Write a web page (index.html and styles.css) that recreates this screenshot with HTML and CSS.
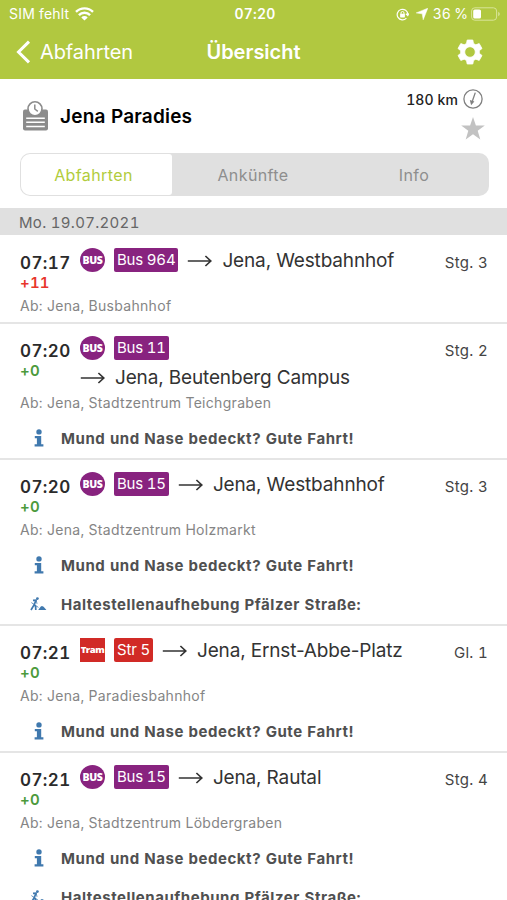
FILE: index.html
```html
<!DOCTYPE html>
<html lang="de">
<head>
    <meta charset="UTF-8">
    <meta name="viewport" content="width=device-width, initial-scale=1.0">
    <title>Übersicht</title>
    <link rel="stylesheet" href="styles.css">
</head>
<body>
    <!-- shared icons -->
    <svg class="icon-defs" width="0" height="0">
        <symbol id="arrow" viewBox="0 0 25 12">
            <path d="M0.8 6H24M18.4 1L23.8 6L18.4 11" fill="none" stroke="#333" stroke-width="1.7"/>
        </symbol>
        <symbol id="info" viewBox="0 0 10 18">
            <circle cx="5" cy="2.9" r="2.7" fill="#4079ae"/>
            <path d="M0.8 7H7.2V15.2H9.4V17.4H0.6V15.2H2.9V9.2H0.8Z" fill="#4079ae"/>
        </symbol>
        <symbol id="works" viewBox="0 0 17 14">
            <circle cx="7.4" cy="1.6" r="1.4" fill="#4079ae"/>
            <path d="M3 3.4L6 3.2L4.2 7.6L5.6 9.4L5.8 13M4.2 7.6L1 13" fill="none" stroke="#4079ae" stroke-width="1.7"/>
            <path d="M1.4 5.6L8.4 10.4M6.2 3.2L7 6.8" fill="none" stroke="#4079ae" stroke-width="0.8"/>
            <path d="M8.2 13L10.8 9.6L12 8.9L13.6 9.7L16.4 13Z" fill="#4079ae"/>
        </symbol>
    </svg>

    <header class="header">
        <div class="status-bar">
            <div class="status-left">
                <span>SIM fehlt</span>
                <svg width="19" height="14" viewBox="0 0 19 14" fill="none" stroke="#fff" stroke-width="2.4">
                    <path d="M1 4.9A12 12 0 0 1 18 4.9"/>
                    <path d="M3.9 8.1A8 8 0 0 1 15.1 8.1"/>
                    <path d="M9.5 13.4L6.3 10.4A4.5 4.5 0 0 1 12.7 10.4Z" fill="#fff" stroke="none"/>
                </svg>
            </div>
            <span class="clock">07:20</span>
            <div class="status-right">
                <svg width="13" height="13" viewBox="0 0 13 13" fill="none" stroke="#fff" stroke-width="1.2">
                    <path d="M10.4 10.2A5.3 5.3 0 1 1 11.8 6.5"/>
                    <path d="M9.9 5.7L11.8 7.5L13 5.4"/>
                    <rect x="4.1" y="5.8" width="4.8" height="3.6" rx="0.6" fill="#fff" stroke="none"/>
                    <path d="M5 6V5A1.5 1.5 0 0 1 8 5V6" stroke-width="1"/>
                </svg>
                <svg class="location" width="12" height="12" viewBox="0 0 12 12">
                    <path d="M11.8 0.2L7.2 11.8L6.2 5.8L0.2 4.9Z" fill="#fff" stroke="#fff" stroke-width="0.5" stroke-linejoin="round"/>
                </svg>
                <span>36 %</span>
                <svg class="battery" width="30" height="14" viewBox="0 0 30 14">
                    <rect x="0.6" y="0.8" width="25" height="12.4" rx="3.2" fill="none" stroke="#d8e498" stroke-width="1"/>
                    <rect x="2.2" y="2.4" width="7.8" height="9.2" rx="1.6" fill="#fff"/>
                    <path d="M27.2 4.8V9.2Q28.8 8.5 28.8 7T27.2 4.8Z" fill="#d8e498"/>
                </svg>
            </div>
        </div>
        <div class="nav-bar">
            <div class="back">
                <svg width="15" height="24" viewBox="0 0 15 24">
                    <path d="M13 1.6L2.5 12L13 22.4" fill="none" stroke="#fff" stroke-width="3"/>
                </svg>
                <span>Abfahrten</span>
            </div>
            <h1>Übersicht</h1>
            <svg class="settings" width="26" height="26" viewBox="0 0 26 26">
                <path d="M10.2 1H15.8L16.5 4.5L18.8 5.8L22.2 4.6L25 9.5L22.3 11.7V14.3L25 16.5L22.2 21.4L18.8 20.2L16.5 21.5L15.8 25H10.2L9.5 21.5L7.2 20.2L3.8 21.4L1 16.5L3.7 14.3V11.7L1 9.5L3.8 4.6L7.2 5.8L9.5 4.5ZM13 7.7A5.3 5.3 0 1 0 13 18.3A5.3 5.3 0 1 0 13 7.7Z" fill="#fff" fill-rule="evenodd" stroke="#fff" stroke-width="0.8" stroke-linejoin="round"/>
            </svg>
        </div>
    </header>

    <section class="station">
        <svg class="station-icon" width="25" height="30" viewBox="0 0 25 30">
            <rect x="0" y="8.5" width="25" height="21" rx="2" fill="#8c8c8c"/>
            <circle cx="12" cy="7.8" r="7" fill="#fff" stroke="#8c8c8c" stroke-width="1.6"/>
            <path d="M11.8 3.6V8L14.8 10.4" fill="none" stroke="#8c8c8c" stroke-width="1.5"/>
            <path d="M3.2 17.3H21.8M3.2 21.3H21.8M3.2 25.5H21.8" stroke="#fff" stroke-width="1.5"/>
        </svg>
        <h2>Jena Paradies</h2>
        <div class="station-side">
            <div class="distance">
                <span>180 km</span>
                <svg width="20" height="20" viewBox="0 0 20 20">
                    <circle cx="10" cy="10" r="9.1" fill="none" stroke="#808080" stroke-width="1.3"/>
                    <path d="M12.3 3.6L9.4 12" stroke="#808080" stroke-width="1.3"/>
                    <path d="M6.8 11L11.4 12.6L8.1 16.2Z" fill="#808080"/>
                </svg>
            </div>
            <svg class="star" width="24" height="23" viewBox="0 0 24 23">
                <path d="M12 0L14.9 8.4H23.8L16.7 13.8L19.3 22.4L12 17.3L4.7 22.4L7.3 13.8L0.2 8.4H9.1Z" fill="#c2c2c2"/>
            </svg>
        </div>
    </section>

    <nav class="tabs">
        <div class="tab active">Abfahrten</div>
        <div class="tab">Ankünfte</div>
        <div class="tab">Info</div>
    </nav>

    <div class="date">Mo. 19.07.2021</div>

    <main class="departures">
        <article class="departure">
            <div class="trip">
                <div class="times">
                    <div class="time">07:17</div>
                    <div class="delay late">+11</div>
                </div>
                <div class="line">
                    <span class="product bus">BUS</span>
                    <span class="badge bus">Bus 964</span>
                    <div class="direction"><svg width="25" height="12"><use href="#arrow"/></svg>Jena, Westbahnhof</div>
                </div>
                <div class="platform">Stg. 3</div>
            </div>
            <div class="from">Ab: Jena, Busbahnhof</div>
        </article>

        <article class="departure">
            <div class="trip">
                <div class="times">
                    <div class="time">07:20</div>
                    <div class="delay">+0</div>
                </div>
                <div class="line">
                    <span class="product bus">BUS</span>
                    <span class="badge bus">Bus 11</span>
                    <div class="direction wrapped"><svg width="25" height="12"><use href="#arrow"/></svg>Jena, Beutenberg Campus</div>
                </div>
                <div class="platform">Stg. 2</div>
            </div>
            <div class="from">Ab: Jena, Stadtzentrum Teichgraben</div>
            <div class="notice"><svg width="10" height="18"><use href="#info"/></svg>Mund und Nase bedeckt? Gute Fahrt!</div>
        </article>

        <article class="departure">
            <div class="trip">
                <div class="times">
                    <div class="time">07:20</div>
                    <div class="delay">+0</div>
                </div>
                <div class="line">
                    <span class="product bus">BUS</span>
                    <span class="badge bus">Bus 15</span>
                    <div class="direction"><svg width="25" height="12"><use href="#arrow"/></svg>Jena, Westbahnhof</div>
                </div>
                <div class="platform">Stg. 3</div>
            </div>
            <div class="from">Ab: Jena, Stadtzentrum Holzmarkt</div>
            <div class="notice"><svg width="10" height="18"><use href="#info"/></svg>Mund und Nase bedeckt? Gute Fahrt!</div>
            <div class="notice"><svg width="17" height="14"><use href="#works"/></svg>Haltestellenaufhebung Pfälzer Straße:</div>
        </article>

        <article class="departure">
            <div class="trip">
                <div class="times">
                    <div class="time">07:21</div>
                    <div class="delay">+0</div>
                </div>
                <div class="line">
                    <span class="product tram">Tram</span>
                    <span class="badge tram">Str 5</span>
                    <div class="direction"><svg width="25" height="12"><use href="#arrow"/></svg>Jena, Ernst-Abbe-Platz</div>
                </div>
                <div class="platform">Gl. 1</div>
            </div>
            <div class="from">Ab: Jena, Paradiesbahnhof</div>
            <div class="notice"><svg width="10" height="18"><use href="#info"/></svg>Mund und Nase bedeckt? Gute Fahrt!</div>
        </article>

        <article class="departure">
            <div class="trip">
                <div class="times">
                    <div class="time">07:21</div>
                    <div class="delay">+0</div>
                </div>
                <div class="line">
                    <span class="product bus">BUS</span>
                    <span class="badge bus">Bus 15</span>
                    <div class="direction"><svg width="25" height="12"><use href="#arrow"/></svg>Jena, Rautal</div>
                </div>
                <div class="platform">Stg. 4</div>
            </div>
            <div class="from">Ab: Jena, Stadtzentrum Löbdergraben</div>
            <div class="notice"><svg width="10" height="18"><use href="#info"/></svg>Mund und Nase bedeckt? Gute Fahrt!</div>
            <div class="notice"><svg width="17" height="14"><use href="#works"/></svg>Haltestellenaufhebung Pfälzer Straße:</div>
        </article>
    </main>
</body>
</html>
```

FILE: styles.css
```css
* {
    box-sizing: border-box;
}

body {
    margin: 0;
    height: 900px;
    overflow: hidden;
    font-family: Inter, Roboto, sans-serif;
    font-variant-numeric: tabular-nums;
    color: #333;
    background: #fff;
}

svg {
    display: block;
    flex: none;
}

.icon-defs {
    position: absolute;
}

/* header */
.header {
    height: 79px;
    background: #b1c840;
    color: #fff;
}

.status-bar,
.nav-bar {
    display: grid;
    grid-template-columns: 1fr auto 1fr;
    align-items: center;
}

.status-bar {
    height: 27px;
    padding: 1px 6px 0 9px;
    font-size: 14px;
    line-height: 18px;
    letter-spacing: 0.2px;
}

.status-left,
.status-right,
.back,
.distance {
    display: flex;
    align-items: center;
}

.status-left {
    gap: 6px;
}

.clock {
    font-weight: 600;
    letter-spacing: 0.2px;
}

.status-right {
    justify-content: flex-end;
    letter-spacing: -0.1px;
}

.location {
    margin: 0 5px 0 7px;
}

.battery {
    margin-left: 3px;
}

.nav-bar {
    height: 50px;
    padding: 0 16px;
}

.back {
    gap: 9px;
    font-size: 20px;
    letter-spacing: -0.1px;
}

.nav-bar h1 {
    margin: 0;
    font-size: 20px;
    font-weight: 600;
}

.settings {
    justify-self: end;
    margin-right: 8px;
}

/* station */
.station {
    display: flex;
    height: 74px;
    padding: 0 22px 0 23px;
}

.station-icon {
    margin-top: 22px;
}

.station h2 {
    flex: 1;
    margin: 26px 0 0 12px;
    font-size: 19px;
    line-height: 24px;
    font-weight: 600;
    letter-spacing: 0.2px;
    color: #000;
}

.station-side {
    display: flex;
    flex-direction: column;
    align-items: flex-end;
    padding-top: 10px;
}

.distance {
    gap: 5px;
    margin-right: 2px;
    font-size: 14px;
    font-weight: 500;
    letter-spacing: 0.1px;
    color: #222;
}

.star {
    margin-top: 8px;
}

/* tabs */
.tabs {
    display: grid;
    grid-template-columns: 151px 162px 1fr;
    height: 43px;
    margin: 0 18px 0 20px;
    padding: 1px;
    border-radius: 10px;
    background: #e0e0e0;
}

.tab {
    display: flex;
    align-items: center;
    justify-content: center;
    font-size: 16px;
    letter-spacing: 0.4px;
    color: #8e8e8e;
}

.tab:last-child {
    padding-left: 6px;
}

.tab.active {
    padding-right: 6px;
    border-radius: 9px 3px 3px 9px;
    background: #fff;
    color: #b1cc3c;
}

.date {
    height: 27px;
    margin-top: 12px;
    padding-left: 19px;
    font-size: 15px;
    line-height: 29px;
    letter-spacing: 0.3px;
    background: #e0e0e0;
    color: #666;
}

/* departures */
.departures {
    padding-top: 1px;
}

.departure {
    padding: 12px 19px 0 20px;
    border-bottom: 2px solid #e5e5e5;
}

.trip {
    display: flex;
    align-items: flex-start;
    min-height: 49px;
}

.times {
    width: 60px;
    padding-top: 4px;
    font-weight: 600;
}

.time {
    font-size: 17px;
    line-height: 22px;
    letter-spacing: 0.4px;
    color: #2b2b2b;
}

.delay {
    font-size: 15px;
    line-height: 18px;
    letter-spacing: 0.2px;
    color: #4c9a3c;
}

.delay.late {
    color: #e8362c;
}

.line {
    display: flex;
    flex-wrap: wrap;
    flex: 1;
    row-gap: 4px;
}

.product,
.badge {
    height: 24px;
    line-height: 24px;
    text-align: center;
    color: #fff;
}

.product {
    width: 25px;
    margin-right: 9px;
    font: 800 10.5px/24px "Open Sans", sans-serif;
    letter-spacing: -0.3px;
}

.product.bus {
    border-radius: 50%;
}

.product.tram {
    font-size: 9.5px;
    letter-spacing: -0.5px;
}

.badge {
    margin-right: 9px;
    padding: 0 3px;
    border-radius: 2px;
    font-size: 15px;
    letter-spacing: -0.2px;
}

.bus {
    background: #88237f;
}

.tram {
    background: #d12a26;
}

.direction {
    display: flex;
    align-items: center;
    gap: 10px;
    height: 25px;
    font-size: 19px;
    line-height: 25px;
    font-variant-numeric: normal;
    letter-spacing: -0.15px;
    white-space: nowrap;
}

.direction.wrapped {
    width: 100%;
    height: 27px;
    margin-bottom: 3px;
}

.platform {
    font-size: 15px;
    line-height: 29px;
    letter-spacing: 0.3px;
    color: #444;
}

.from {
    height: 25px;
    font-size: 14px;
    line-height: 18px;
    letter-spacing: 0.3px;
    color: #858585;
}

.notice {
    display: grid;
    grid-template-columns: 33px 1fr;
    align-items: center;
    height: 39px;
    padding: 0 0 1px 2px;
    column-gap: 6px;
    font-size: 15px;
    font-weight: 700;
    letter-spacing: 0.55px;
    color: #505050;
}

.notice svg {
    justify-self: center;
}
```
